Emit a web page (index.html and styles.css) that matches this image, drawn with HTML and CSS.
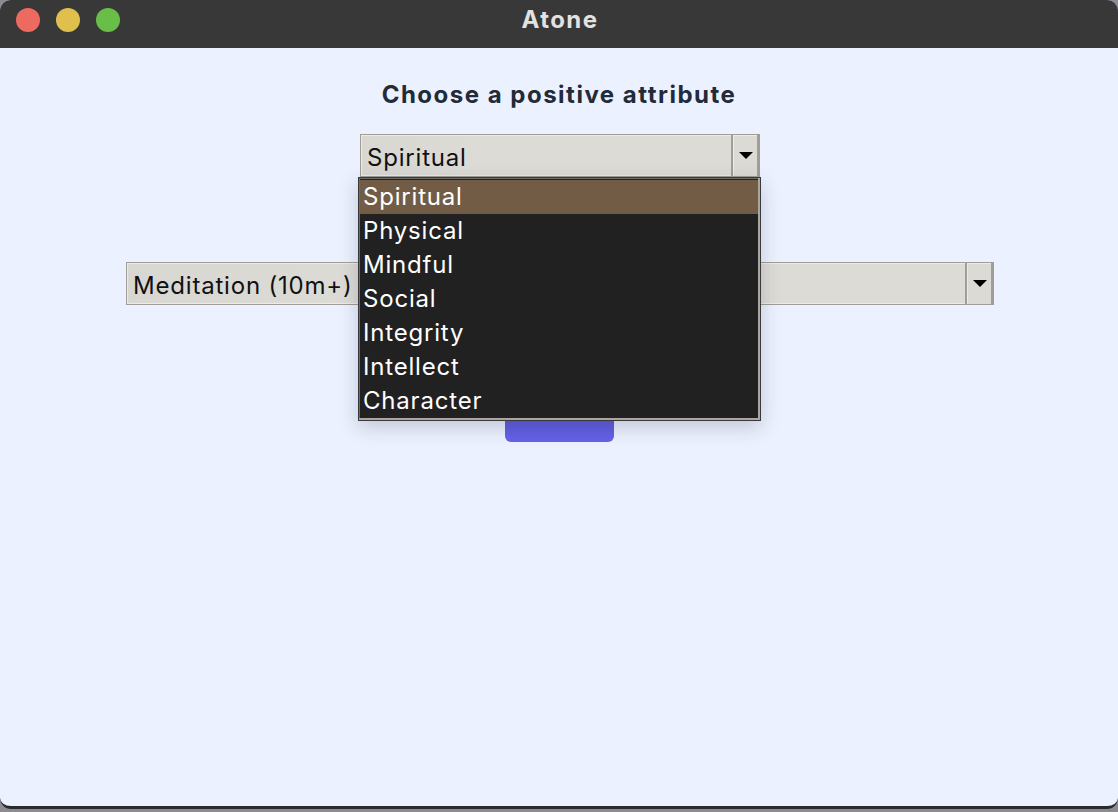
FILE: index.html
```html
<!DOCTYPE html>
<html>
<head>
<meta charset="utf-8">
<title>Atone</title>
<link rel="stylesheet" href="styles.css">
</head>
<body>
<div class="window">
  <div class="titlebar">
    <div class="lights">
      <span class="light red"></span>
      <span class="light yellow"></span>
      <span class="light green"></span>
    </div>
    <div class="title">Atone</div>
  </div>
  <div class="content">
    <h1 class="heading">Choose a positive attribute</h1>
    <div class="combo-wrap">
      <div class="combo combo-small">
        <div class="combo-field">Spiritual</div>
        <div class="combo-btn"><span class="arrow"></span></div>
      </div>
      <ul class="menu">
        <li class="menu-item active">Spiritual</li>
        <li class="menu-item">Physical</li>
        <li class="menu-item">Mindful</li>
        <li class="menu-item">Social</li>
        <li class="menu-item">Integrity</li>
        <li class="menu-item">Intellect</li>
        <li class="menu-item">Character</li>
      </ul>
    </div>
    <div class="combo combo-wide">
      <div class="combo-field">Meditation (10m+)</div>
      <div class="combo-btn"><span class="arrow"></span></div>
    </div>
    <button class="submit"></button>
  </div>
</div>
</body>
</html>
```

FILE: styles.css
```css
html, body {
  margin: 0;
  padding: 0;
}
body {
  width: 1118px;
  height: 812px;
  background: #8e8a92;
  overflow: hidden;
  font-family: "Inter", "Liberation Sans", sans-serif;
}
.window {
  width: 1118px;
  height: 809px;
  box-sizing: border-box;
  border-radius: 11px;
  overflow: hidden;
  background: #ebf1fe;
  border-bottom: 3px solid #2a2a2c;
  display: flex;
  flex-direction: column;
}
.titlebar {
  height: 48px;
  flex: 0 0 48px;
  background: #383838;
  position: relative;
  display: flex;
  align-items: center;
  justify-content: center;
}
.lights {
  position: absolute;
  left: 16px;
  top: 8px;
  display: flex;
  gap: 16px;
}
.light {
  width: 24px;
  height: 24px;
  border-radius: 50%;
  display: block;
}
.red { background: #ec6a5f; }
.yellow { background: #e0c04d; }
.green { background: #69be47; }
.title {
  color: #e2e2e2;
  font-weight: 700;
  font-size: 24px;
  letter-spacing: 1.4px;
  margin-top: -10px;
  margin-left: 2px;
}
.content {
  flex: 1;
  display: flex;
  flex-direction: column;
  align-items: center;
  padding-top: 33px;
}
.heading {
  margin: 0;
  font-size: 24px;
  line-height: 28px;
  font-weight: 700;
  color: #232a38;
  letter-spacing: 1.5px;
}
.combo-wrap {
  position: relative;
  margin-top: 25px;
  margin-left: 2px;
}
.combo {
  display: flex;
  height: 43px;
  box-sizing: border-box;
  border: 1px solid #9f9d96;
  background: #dcdad5;
}
.combo-small { width: 400px; }
.combo-wide {
  width: 868px;
  margin-top: 85px;
  margin-left: 2px;
}
.combo-field {
  flex: 1;
  box-shadow: inset 1px 1px 0 #ecebe6, inset 0 -1px 0 #ecebe6;
  border-right: 2px solid #a09e97;
  display: flex;
  align-items: center;
  padding-left: 6px;
  padding-top: 3px;
  font-size: 24px;
  letter-spacing: 0.8px;
  color: #111;
  background: linear-gradient(90deg, #d9d7d2, #dddbd6 30%);
}
.combo-btn {
  width: 24px;
  box-shadow: inset 1px 1px 0 #ecebe6;
  border-right: 2px solid #a09e97;
  display: flex;
  align-items: center;
  justify-content: center;
}
.arrow {
  width: 0;
  height: 0;
  border-left: 7px solid transparent;
  border-right: 7px solid transparent;
  border-top: 7px solid #000;
  margin-left: 1px;
}
.menu {
  position: absolute;
  left: -2px;
  top: 43px;
  width: 403px;
  height: 244px;
  box-sizing: border-box;
  margin: 0;
  padding: 2px 2px 2px 1px;
  list-style: none;
  background: #212121;
  border: 1px solid #3a3a3c;
  box-shadow: inset -2px -2px 0 #a9a79f, inset 1px 1px 0 #6b6b6b, 0 6px 18px rgba(40, 50, 80, 0.22);
  z-index: 5;
}
.menu-item {
  height: 34px;
  line-height: 34px;
  font-size: 24px;
  letter-spacing: 0.8px;
  color: #ffffff;
  padding-left: 3px;
}
.menu-item.active {
  background: #735c45;
}
.submit {
  margin-top: 100px;
  width: 109px;
  height: 37px;
  border: none;
  border-radius: 6px;
  background: linear-gradient(180deg, #5753d6, #6662e8);
}
```
